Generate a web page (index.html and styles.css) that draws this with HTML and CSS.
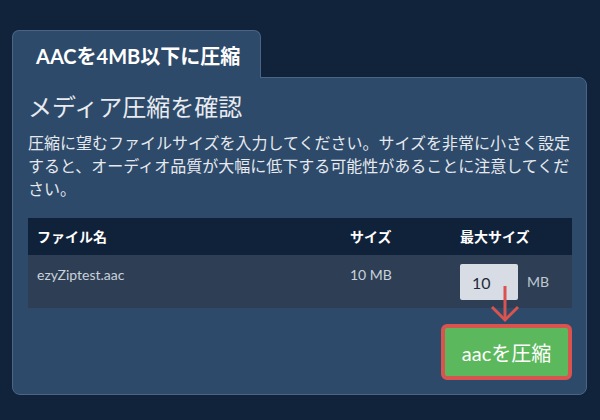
FILE: index.html
```html
<!DOCTYPE html>
<html lang="ja">
<head>
<meta charset="utf-8">
<title>AAC圧縮</title>
<link rel="stylesheet" href="styles.css">
</head>
<body>
<div class="wrap">
  <div class="tab">AACを4MB以下に圧縮</div>
  <div class="panel">
    <h2 class="title">メディア圧縮を確認</h2>
    <p class="desc">圧縮に望むファイルサイズを入力してください。サイズを非常に小さく設定すると、オーディオ品質が大幅に低下する可能性があることに注意してください。</p>
    <table class="files">
      <colgroup>
        <col class="w-name">
        <col class="w-size">
        <col class="w-max">
      </colgroup>
      <thead>
        <tr>
          <th>ファイル名</th>
          <th>サイズ</th>
          <th>最大サイズ</th>
        </tr>
      </thead>
      <tbody>
        <tr>
          <td>ezyZiptest.aac</td>
          <td>10 MB</td>
          <td>
            <div class="maxbox">
              <span class="inwrap">
                <input class="num" type="text" value="10">
                <svg class="arrow" width="30" height="37" viewBox="0 0 30 37" aria-hidden="true">
                  <line x1="15" y1="0" x2="15" y2="34" stroke="#d9534f" stroke-width="3"/>
                  <polyline points="2,21 15,34 28,21" fill="none" stroke="#d9534f" stroke-width="3"/>
                </svg>
              </span>
              <span class="unit">MB</span>
            </div>
          </td>
        </tr>
      </tbody>
    </table>
    <div class="actions">
      <button class="go" type="button">aacを圧縮</button>
    </div>
  </div>
</div>
</body>
</html>
```

FILE: styles.css
```css
html, body {
  margin: 0;
  padding: 0;
  background: #11233a;
}
body {
  font-family: Lato, "Noto Sans CJK JP", sans-serif;
  color: #e6e9ee;
}
.wrap {
  padding: 30px 0 0 12px;
  width: 575px;
}
.tab {
  position: relative;
  z-index: 1;
  display: inline-block;
  background: #2d4a6a;
  border: 1px solid #4b6585;
  border-bottom: none;
  border-radius: 7px 7px 0 0;
  padding: 13px 20px 10px 23px;
  margin-bottom: -1px;
  font-size: 20px;
  line-height: 24px;
  font-weight: 700;
  color: #ffffff;
}
.panel {
  background: #2d4a6a;
  border: 1px solid #4b6585;
  border-radius: 0 8px 8px 8px;
  padding: 16px 15px 14px 15px;
}
.title {
  margin: 0;
  font-size: 24px;
  line-height: 26px;
  font-weight: 400;
  color: #e8ebef;
}
.desc {
  margin: 11px -8px 0 0;
  font-size: 16px;
  line-height: 23px;
  color: #e6e9ee;
}
.files {
  margin-top: 18px;
  width: 544px;
  table-layout: fixed;
  border-collapse: collapse;
  font-size: 14px;
  line-height: 20px;
}
.w-name { width: 314px; }
.w-size { width: 110px; }
.w-max { width: 120px; }
.files th {
  background: #10223a;
  color: #ffffff;
  font-weight: 700;
  text-align: left;
  padding: 9px 8px 8px 8px;
}
.files td {
  background: #2e3f55;
  color: #c9d1db;
  vertical-align: top;
  padding: 10px 8px 8px 8px;
  height: 35px;
}
.files td:first-child,
.files th:first-child {
  padding-left: 9px;
}
.maxbox {
  display: flex;
  align-items: center;
  gap: 9px;
  margin-top: -1px;
}
.inwrap {
  position: relative;
  display: block;
  width: 58px;
  height: 36px;
}
.num {
  box-sizing: border-box;
  width: 58px;
  height: 36px;
  margin: 0;
  border: none;
  border-radius: 2px;
  background: #d8dde5;
  color: #1f2b3a;
  font-family: Lato, "Noto Sans CJK JP", sans-serif;
  font-size: 16px;
  padding: 0 12px;
  outline: none;
}
.arrow {
  position: absolute;
  left: 30px;
  top: 22px;
  z-index: 2;
}
.unit {
  color: #c0c8d3;
  font-size: 14px;
}
.actions {
  display: flex;
  justify-content: flex-end;
  margin-top: 16px;
  width: 544px;
}
.go {
  box-sizing: border-box;
  width: 131px;
  height: 56px;
  background: #5cb85c;
  border: 4px solid #d9534f;
  border-radius: 6px;
  color: #ffffff;
  font-family: Lato, "Noto Sans CJK JP", sans-serif;
  font-size: 20px;
  padding: 0;
}
```
